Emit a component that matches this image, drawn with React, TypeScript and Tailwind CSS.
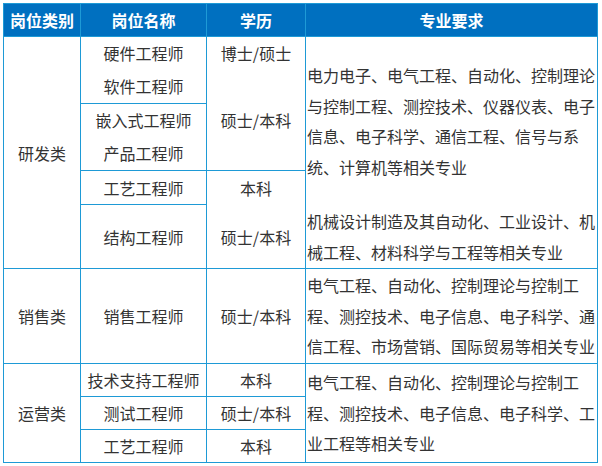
import React from "react";

const B = "border-[#1e9ad6]";

function Lines({ lines }: { lines: string[] }) {
  return (
    <>
      {lines.map((l, i) => (
        <div key={i} className="whitespace-nowrap">
          {l}
        </div>
      ))}
    </>
  );
}

export default function App() {
  const cell = `border-r border-b ${B} flex flex-col items-center justify-center text-center`;
  const cellNB = `border-r ${B} flex flex-col items-center justify-start text-center`;
  const req = `border-r border-b ${B} flex flex-col justify-center items-start pl-[1px] leading-[30.5px]`;
  return (
    <div
      className="w-[602px] h-[466px] bg-white pl-[3px] pt-[3px] text-[16px] text-[#333333]"
      style={{ fontFamily: '"Noto Sans CJK SC", "Noto Sans", sans-serif' }}
    >
      <div
        className={`grid grid-cols-[77px_126px_99px_292px] grid-rows-[33px_67px_67px_34px_64px_95px_33px_33px_33px] w-[595px] border-l border-t ${B}`}
      >
        {/* Header */}
        <div className={`col-start-1 row-start-1 bg-[#0070c0] text-white font-bold ${cell}`}>岗位类别</div>
        <div className={`col-start-2 row-start-1 bg-[#0070c0] text-white font-bold ${cell}`}>岗位名称</div>
        <div className={`col-start-3 row-start-1 bg-[#0070c0] text-white font-bold ${cell}`}>学历</div>
        <div className={`col-start-4 row-start-1 bg-[#0070c0] text-white font-bold ${cell}`}>专业要求</div>

        {/* Column 1 */}
        <div className={`col-start-1 row-start-2 row-span-4 ${cell}`}>研发类</div>
        <div className={`col-start-1 row-start-6 ${cell}`}>销售类</div>
        <div className={`col-start-1 row-start-7 row-span-3 ${cell}`}>运营类</div>

        {/* Column 2 */}
        <div className={`col-start-2 row-start-2 leading-[33px] ${cell}`}>
          <Lines lines={["硬件工程师", "软件工程师"]} />
        </div>
        <div className={`col-start-2 row-start-3 leading-[33px] ${cell}`}>
          <Lines lines={["嵌入式工程师", "产品工程师"]} />
        </div>
        <div className={`col-start-2 row-start-4 ${cell}`}>工艺工程师</div>
        <div className={`col-start-2 row-start-5 ${cell}`}>结构工程师</div>
        <div className={`col-start-2 row-start-6 ${cell}`}>销售工程师</div>
        <div className={`col-start-2 row-start-7 ${cell}`}>技术支持工程师</div>
        <div className={`col-start-2 row-start-8 ${cell}`}>测试工程师</div>
        <div className={`col-start-2 row-start-9 ${cell}`}>工艺工程师</div>

        {/* Column 3 */}
        <div className={`col-start-3 row-start-2 leading-[33px] ${cellNB}`}>
          <div className="h-[33px]">博士/硕士</div>
        </div>
        <div className={`col-start-3 row-start-3 border-b leading-[33px] ${cellNB}`}>
          <div className="h-[33px]">硕士/本科</div>
        </div>
        <div className={`col-start-3 row-start-4 border-r ${B} flex flex-col items-center justify-center text-center`}>本科</div>
        <div className={`col-start-3 row-start-5 ${cell}`}>硕士/本科</div>
        <div className={`col-start-3 row-start-6 ${cell}`}>硕士/本科</div>
        <div className={`col-start-3 row-start-7 ${cell}`}>本科</div>
        <div className={`col-start-3 row-start-8 ${cell}`}>硕士/本科</div>
        <div className={`col-start-3 row-start-9 ${cell}`}>本科</div>

        {/* Column 4 */}
        <div className={`col-start-4 row-start-2 row-span-3 border-r ${B} flex flex-col justify-center items-start pl-[1px] leading-[30.5px]`}>
          <Lines
            lines={[
              "电力电子、电气工程、自动化、控制理论",
              "与控制工程、测控技术、仪器仪表、电子",
              "信息、电子科学、通信工程、信号与系",
              "统、计算机等相关专业",
            ]}
          />
        </div>
        <div className={`col-start-4 row-start-5 ${req}`}>
          <Lines lines={["机械设计制造及其自动化、工业设计、机", "械工程、材料科学与工程等相关专业"]} />
        </div>
        <div className={`col-start-4 row-start-6 ${req}`}>
          <Lines
            lines={[
              "电气工程、自动化、控制理论与控制工",
              "程、测控技术、电子信息、电子科学、通",
              "信工程、市场营销、国际贸易等相关专业",
            ]}
          />
        </div>
        <div className={`col-start-4 row-start-7 row-span-3 ${req}`}>
          <Lines
            lines={[
              "电气工程、自动化、控制理论与控制工",
              "程、测控技术、电子信息、电子科学、工",
              "业工程等相关专业",
            ]}
          />
        </div>
      </div>
    </div>
  );
}
